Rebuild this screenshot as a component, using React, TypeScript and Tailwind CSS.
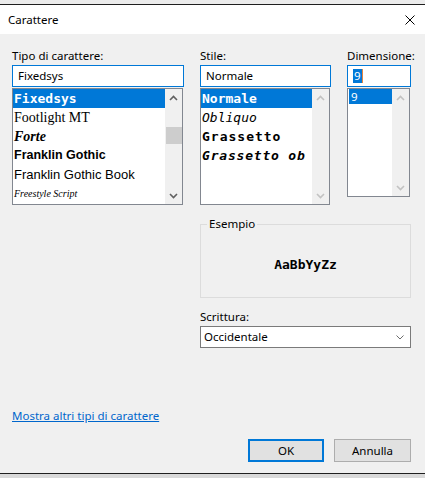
import type { ReactNode } from 'react'

const mono = "font-['DejaVu_Sans_Mono',monospace]"

function Arrow({ up, color }: { up?: boolean; color: string }) {
  return (
    <svg width="9" height="6" viewBox="0 0 9 6">
      <polyline
        points={up ? '1,5 4.5,1.5 8,5' : '1,1 4.5,4.5 8,1'}
        fill="none"
        stroke={color}
        strokeWidth="1.6"
      />
    </svg>
  )
}

function ScrollBar({ thumb, disabled }: { thumb?: boolean; disabled?: boolean }) {
  const c = disabled ? '#c2c2c2' : '#606060'
  return (
    <div className="flex w-[17px] shrink-0 flex-col bg-[#f0f0f0]">
      <div className="flex h-[17px] items-center justify-center">
        <Arrow up color={c} />
      </div>
      <div className="flex-1">{thumb && <div className="ml-px mt-[21px] h-[17px] bg-[#cdcdcd]" />}</div>
      <div className="flex h-[17px] items-center justify-center">
        <Arrow color={c} />
      </div>
    </div>
  )
}

function Label({ children }: { children: ReactNode }) {
  return <div className="mb-px h-[16px] whitespace-nowrap">{children}</div>
}

function Edit({ children, className }: { children: ReactNode; className: string }) {
  return (
    <div className={`flex h-[22px] items-center border border-[#0078d7] bg-white pl-[5px] ${className}`}>
      {children}
    </div>
  )
}

function Row({ children, className = '', selected }: { children: ReactNode; className?: string; selected?: boolean }) {
  return (
    <div
      className={`h-[19px] overflow-hidden whitespace-nowrap pl-px leading-[19px] ${
        selected ? 'bg-[#0078d7] text-white' : ''
      } ${className}`}
    >
      {children}
    </div>
  )
}

export default function App() {
  return (
    <div className="flex h-[478px] w-[425px] flex-col bg-[#dadada] font-['Noto_Sans','Liberation_Sans',sans-serif] text-[11.5px] leading-[16px] text-black">
      <div className="h-[4px] bg-[#ececec]" />
      <div className="h-px bg-[#1f1f1f]" />
      <div className="flex h-[29px] items-center justify-between bg-white pl-[8px] pr-[10px]">
        <span>Carattere</span>
        <svg width="10" height="10" viewBox="0 0 10 10">
          <path d="M0.5 0.5 L9.5 9.5 M9.5 0.5 L0.5 9.5" stroke="#000" strokeWidth="1" fill="none" />
        </svg>
      </div>

      <div className="flex flex-1 flex-col bg-[#f0f0f0] pl-[12px] pt-[14px]">
        <div className="flex">
          {/* tipo di carattere */}
          <div className="w-[172px]">
            <Label>Tipo di carattere:</Label>
            <Edit className="w-[172px]">Fixedsys</Edit>
            <div className="mt-px flex h-[117px] w-[171px] border border-[#828790] bg-white">
              <div className="min-w-0 flex-1">
                <Row selected className={`${mono} text-[13px] font-bold`}>
                  Fixedsys
                </Row>
                <Row className="font-['Liberation_Serif',serif] text-[14px]">Footlight MT</Row>
                <Row className="font-['Liberation_Serif',serif] text-[14px] font-bold italic">Forte</Row>
                <Row className="font-['Liberation_Sans',sans-serif] text-[12.5px] font-bold">Franklin Gothic</Row>
                <Row className="font-['Liberation_Sans',sans-serif] text-[13px]">Franklin Gothic Book</Row>
                <Row className="font-['Liberation_Serif',serif] text-[10px] italic">Freestyle Script</Row>
              </div>
              <ScrollBar thumb />
            </div>
          </div>

          <div className="ml-[16px] w-[211px]">
            <div className="flex">
              {/* stile */}
              <div className="w-[131px]">
                <Label>Stile:</Label>
                <Edit className="w-[131px]">Normale</Edit>
                <div className="mt-px flex h-[117px] w-[130px] border border-[#828790] bg-white">
                  <div className={`min-w-0 flex-1 ${mono} text-[13px]`}>
                    <Row selected className="font-bold">
                      Normale
                    </Row>
                    <Row className="italic">Obliquo</Row>
                    <Row className="font-bold tracking-[1px]">Grassetto</Row>
                    <Row className="font-bold italic tracking-[0.8px]">Grassetto ob</Row>
                  </div>
                  <ScrollBar disabled />
                </div>
              </div>

              {/* dimensione */}
              <div className="ml-[16px] w-[64px]">
                <Label>Dimensione:</Label>
                <Edit className="w-[64px]">
                  <span className="flex h-[14px] items-center bg-[#0078d7] px-px text-white">9</span>
                  <span className="h-[14px] w-px bg-[#e6843f]" />
                </Edit>
                <div className="mt-px flex h-[109px] w-[63px] border border-[#828790] bg-white">
                  <div className="min-w-0 flex-1 pl-px">
                    <div className="h-[15px] bg-[#0078d7] pl-[2px] leading-[15px] text-white">9</div>
                  </div>
                  <ScrollBar disabled />
                </div>
              </div>
            </div>

            <fieldset className="mt-[11px] w-[211px] border border-[#dcdcdc]">
              <legend className="ml-[6px] px-[2px]">Esempio</legend>
              <div className={`h-[65px] pt-[25px] text-center ${mono} text-[13px] font-bold`}>AaBbYyZz</div>
            </fieldset>

            <div className="mt-[11px]">
              <Label>Scrittura:</Label>
              <div className="flex h-[22px] w-[211px] items-center justify-between border border-[#7a7a7a] bg-white pl-[3px] pr-[6px]">
                <span>Occidentale</span>
                <svg width="8" height="5" viewBox="0 0 8 5">
                  <polyline points="0.5,0.5 4,4 7.5,0.5" fill="none" stroke="#6d6d6d" strokeWidth="1" />
                </svg>
              </div>
            </div>
          </div>
        </div>

        <a href="#" className="mt-[60px] self-start text-[#0066cc] underline">
          Mostra altri tipi di carattere
        </a>

        <div className="mr-[14px] mt-[15px] flex justify-end gap-[10px]">
          <button className="h-[23px] w-[76px] border-2 border-[#0078d7] bg-[#e1e1e1]">OK</button>
          <button className="h-[23px] w-[77px] border border-[#adadad] bg-[#e1e1e1]">Annulla</button>
        </div>
      </div>

      <div className="h-px bg-[#1f1f1f]" />
      <div className="h-[4px] bg-[#d9d9d9]" />
    </div>
  )
}
